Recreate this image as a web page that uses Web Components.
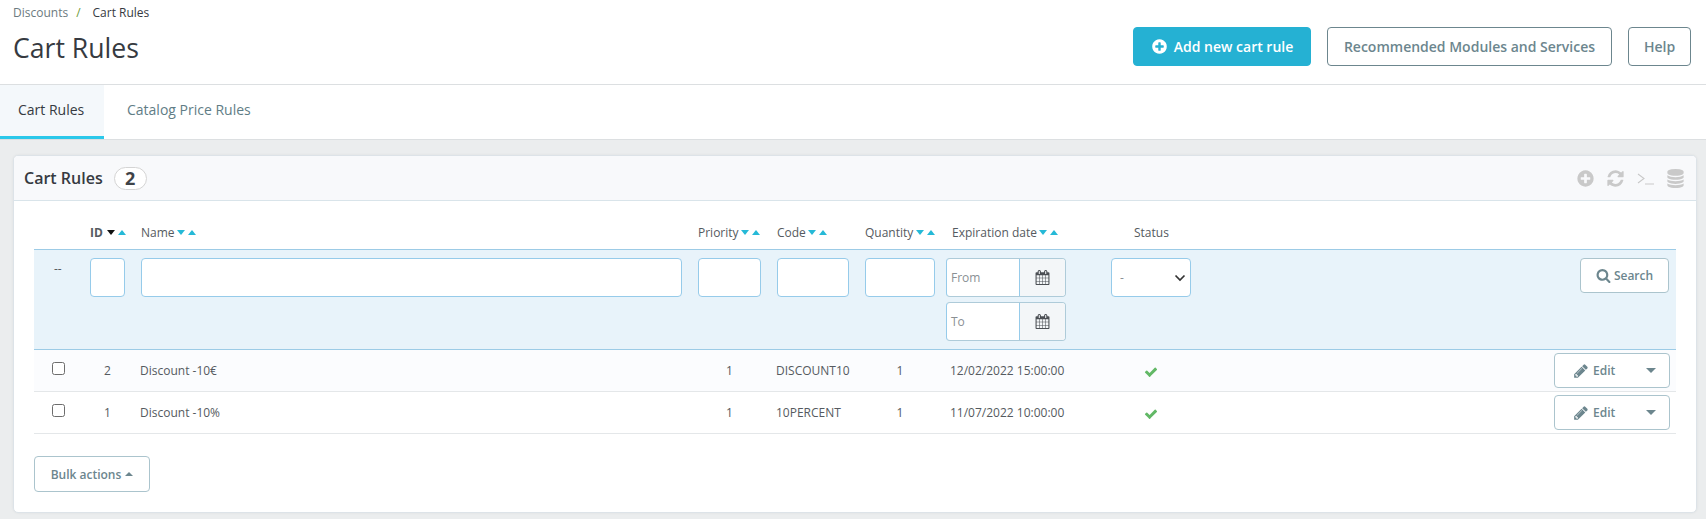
<!DOCTYPE html>
<html lang="en"><head><meta charset="utf-8"><title>Cart Rules</title>
<style>
html,body{margin:0;padding:0;height:519px;overflow:hidden;background:#ebedee;font-family:"Open Sans","Liberation Sans",sans-serif;color:#363a41}
</style></head><body>
<page-head></page-head>
<tab-bar></tab-bar>
<rule-panel title-text="Cart Rules" count="2">
  <head-row></head-row>
  <filter-row></filter-row>
  <data-row rid="2" name="Discount -10€" code="DISCOUNT10" date="12/02/2022 15:00:00" tint></data-row>
  <data-row rid="1" name="Discount -10%" code="10PERCENT" date="11/07/2022 10:00:00"></data-row>
  <bulk-bar></bulk-bar>
</rule-panel>
<script>
const P={
plus:'M1344 960v-128q0-26-19-45t-45-19h-256v-256q0-26-19-45t-45-19h-128q-26 0-45 19t-19 45v256h-256q-26 0-45 19t-19 45v128q0 26 19 45t45 19h256v256q0 26 19 45t45 19h128q26 0 45-19t19-45v-256h256q26 0 45-19t19-45zm320-64q0 209-103 385.5t-279.5 279.5-385.5 103-385.5-103-279.5-279.5-103-385.5 103-385.5 279.5-279.5 385.5-103 385.5 103 279.5 279.5 103 385.5z',
refresh:'M1639 1056q0 5-1 7-64 268-268 434.5t-478 166.5q-146 0-282.5-55t-243.5-157l-129 129q-19 19-45 19t-45-19-19-45v-448q0-26 19-45t45-19h448q26 0 45 19t19 45-19 45l-137 137q71 66 161 102t187 36q134 0 250-65t186-179q11-17 53-117 8-23 30-23h192q13 0 22.5 9.5t9.5 22.5zm25-800v448q0 26-19 45t-45 19h-448q-26 0-45-19t-19-45 19-45l138-138q-148-137-349-137-134 0-250 65t-186 179q-11 17-53 117-8 23-30 23h-199q-13 0-22.5-9.5t-9.5-22.5v-7q65-268 270-434.5t480-166.5q146 0 284 55.5t245 156.5l130-129q19-19 45-19t45 19 19 45z',
db:'M896 768q237 0 443-43t325-127v170q0 69-103 128t-280 93.5-385 34.5-385-34.5-280-93.5-103-128v-170q119 84 325 127t443 43zm0 768q237 0 443-43t325-127v170q0 69-103 128t-280 93.5-385 34.5-385-34.5-280-93.5-103-128v-170q119 84 325 127t443 43zm0-384q237 0 443-43t325-127v170q0 69-103 128t-280 93.5-385 34.5-385-34.5-280-93.5-103-128v-170q119 84 325 127t443 43zm0-1152q208 0 385 34.5t280 93.5 103 128v128q0 69-103 128t-280 93.5-385 34.5-385-34.5-280-93.5-103-128v-128q0-69 103-128t280-93.5 385-34.5z',
cal:'M192 1664h288v-288h-288v288zm352 0h320v-288h-320v288zm-352-352h288v-320h-288v320zm352 0h320v-320h-320v320zm-352-384h288v-288h-288v288zm736 736h320v-288h-320v288zm-384-736h320v-288h-320v288zm768 736h288v-288h-288v288zm-384-352h320v-320h-320v320zm-352-864v-288q0-13-9.5-22.5t-22.5-9.5h-64q-13 0-22.5 9.5t-9.5 22.5v288q0 13 9.5 22.5t22.5 9.5h64q13 0 22.5-9.5t9.5-22.5zm736 864h288v-320h-288v320zm-384-384h320v-288h-320v288zm384 0h288v-288h-288v288zm32-480v-288q0-13-9.5-22.5t-22.5-9.5h-64q-13 0-22.5 9.5t-9.5 22.5v288q0 13 9.5 22.5t22.5 9.5h64q13 0 22.5-9.5t9.5-22.5zm384-64v1280q0 52-38 90t-90 38h-1408q-52 0-90-38t-38-90v-1280q0-52 38-90t90-38h128v-96q0-66 47-113t113-47h64q66 0 113 47t47 113v96h384v-96q0-66 47-113t113-47h64q66 0 113 47t47 113v96h128q52 0 90 38t38 90z',
check:'M1671 566q0 40-28 68l-724 724-136 136q-28 28-68 28t-68-28l-136-136-362-362q-28-28-28-68t28-68l136-136q28-28 68-28t68 28l294 295 656-657q28-28 68-28t68 28l136 136q28 28 28 68z',
search:'M1216 832q0-185-131.5-316.5t-316.5-131.5-316.5 131.5-131.5 316.5 131.5 316.5 316.5 131.5 316.5-131.5 131.5-316.5zm512 832q0 52-38 90t-90 38q-54 0-90-38l-343-342q-179 124-399 124-143 0-273.5-55.5t-225-150-150-225-55.5-273.5 55.5-273.5 150-225 225-150 273.5-55.5 273.5 55.5 225 150 150 225 55.5 273.5q0 220-124 399l343 343q37 37 37 90z',
pencil:'M491 1536l91-91-235-235-91 91v107h128v128h107zm523-928q0-22-22-22-10 0-17 7l-542 542q-7 7-7 17 0 22 22 22 10 0 17-7l542-542q7-7 7-17zm-54-192l416 416-832 832h-416v-416zm683 96q0 53-37 90l-166 166-416-416 166-165q36-38 90-38 53 0 91 38l235 234q37 39 37 91z'};
const ico=(n,s,c)=>`<svg width="${s}" height="${s}" viewBox="0 0 1792 1792" fill="${c}" style="display:block;flex:none"><path d="${P[n]}"/></svg>`;
const COLS='56px 51px 557px 79px 88px 81px 165px 443px 123px';
const rowCss=`:host{display:grid;grid-template-columns:${COLS};margin:0 20px;font-size:12px;color:#555a60}`;
class Base extends HTMLElement{
  constructor(){super();this.attachShadow({mode:'open'})}
  connectedCallback(){this.shadowRoot.innerHTML=this.html()}
}
customElements.define('page-head',class extends Base{html(){return `<style>
:host{display:flex;justify-content:space-between;height:84px;background:#fff;border-bottom:1px solid #dcdfe1;padding:0 15px 0 13px;box-sizing:content-box}
.crumb{font-size:12px;line-height:16px;padding-top:5px;color:#363a41}
.crumb a{color:#6c7a80}.crumb i{font-style:normal;color:#6d9b3a;margin:0 12px 0 8px}
h1{font-size:26.6px;font-weight:400;line-height:38px;margin:8px 0 0;color:#363a41}
.acts{display:flex;gap:16px;padding-top:27px;align-items:flex-start}
.b{box-sizing:border-box;height:39px;display:flex;align-items:center;justify-content:center;gap:6px;border-radius:4px;font-size:14px;font-weight:600;border:1px solid #6c868e;color:#6c868e;background:#fff}
.p{background:#25b1d3;border-color:#25b1d3;color:#fff;width:178px}
</style><div><div class="crumb"><a>Discounts</a><i>/</i>Cart Rules</div><h1>Cart Rules</h1></div>
<div class="acts"><div class="b p">${ico('plus',17,'#fff')}<span>Add new cart rule</span></div><div class="b" style="width:285px">Recommended Modules and Services</div><div class="b" style="width:63px">Help</div></div>`}});
customElements.define('tab-bar',class extends Base{html(){return `<style>
:host{display:flex;height:54px;background:#fff;border-bottom:1px solid #dcdfe1;font-size:14px}
div{box-sizing:border-box;display:flex;align-items:center;height:54px;padding:0 18px 3px;color:#5f7d86;border-bottom:3px solid transparent}
.a{width:104px;background:#f4f8fb;color:#363a41;border-bottom-color:#2bc8ea}
.n{padding-left:23px}
</style><div class="a">Cart Rules</div><div class="n">Catalog Price Rules</div>`}});
customElements.define('rule-panel',class extends Base{html(){return `<style>
:host{display:block;box-sizing:border-box;height:358px;margin:15px 9px 0 13px;background:#fff;border:1px solid #dde3e8;border-radius:5px;box-shadow:0 0 3px rgba(0,0,0,.06);overflow:hidden}
.h{box-sizing:border-box;height:45px;display:flex;align-items:center;padding:0 11px 0 10px;background:#f8f9fb;border-bottom:1px solid #d9e4ea;font-size:16px;font-weight:600;color:#363a41}
.c{margin-left:11px;width:33px;box-sizing:border-box;height:23px;border:1px solid #d4d4d4;border-radius:12px;display:flex;align-items:center;justify-content:center;font-size:18px;font-weight:700;color:#3f4348;background:#fff}
.t{margin-left:auto;display:flex;align-items:center;gap:11px}
svg.term{display:block}
</style><div class="h"><span>${this.getAttribute('title-text')}</span><span class="c">${this.getAttribute('count')}</span>
<span class="t">${ico('plus',19,'#c9c9c9')}${ico('refresh',19,'#c9c9c9')}<svg class="term" width="19" height="19" viewBox="0 0 19 19" fill="none" stroke="#c9c9c9" stroke-width="1.1"><path d="M2 5l6 4.500-6 4.500M9 15h9"/></svg>${ico('db',19,'#c9c9c9')}</span></div><slot></slot>`}});
const sort=(d='#25b9d7')=>`<span class="s"><svg width="8" height="5" viewBox="0 0 8 5"><path d="M0 0h8L4 5z" fill="${d}"/></svg><svg width="8" height="5" viewBox="0 0 8 5"><path d="M0 5h8L4 0z" fill="#25b9d7"/></svg></span>`;
customElements.define('head-row',class extends Base{html(){return `<style>${rowCss}
:host{height:48px;align-items:center;padding-top:14px;box-sizing:border-box;font-size:12px}
span.l{display:flex;align-items:center;gap:2.5px}.s{display:inline-flex;gap:3px}b{font-weight:700;margin-right:1.5px}
</style><span></span><span class="l"><b>ID</b>${sort('#111')}</span><span class="l">Name${sort()}</span><span class="l">Priority${sort()}</span><span class="l">Code${sort()}</span><span class="l">Quantity${sort()}</span><span class="l" style="padding-left:6px">Expiration date${sort()}</span><span class="l" style="padding-left:23px">Status</span><span></span>`}});
customElements.define('filter-row',class extends Base{html(){
const inp=w=>`<div class="i" style="width:${w}px"></div>`;
const dt=t=>`<div class="g"><div class="f">${t}</div><div class="ad">${ico('cal',15,'#4b4f54')}</div></div>`;
return `<style>${rowCss}
:host{box-sizing:border-box;height:101px;background:#e8f3fa;border-top:1px solid #9ccbe6;border-bottom:1px solid #9ccbe6;padding-top:8px;align-items:start}
.i,.sel,.g{box-sizing:border-box;height:39px;background:#fff;border:1px solid #96cbea;border-radius:4px}
.dash{padding:4px 0 0 20px;font-size:12px;line-height:14px}
.g{display:flex;width:120px;overflow:hidden;border-color:#aecbd9 #aecbd9 #aecbd9 #96cbea}.g+.g{margin-top:5px}
.f{box-sizing:border-box;width:73px;padding-left:4px;display:flex;align-items:center;font-size:12px;color:#8a9094;border-right:1px solid #96cbea}
.ad{flex:1;background:#f3f6f8;display:flex;align-items:center;justify-content:center}
.sel{width:80px;display:flex;align-items:center;justify-content:space-between;padding:0 4px 0 8px;font-size:12px;color:#8a9094}
.btn{box-sizing:border-box;width:89px;height:35px;margin-left:26px;background:#fff;border:1px solid #abc4cd;border-radius:4px;display:flex;align-items:center;justify-content:center;gap:3px;font-size:12px;font-weight:600;color:#6c868e}
</style><div class="dash">--</div>${inp(35)}${inp(541)}${inp(63)}${inp(72)}${inp(70)}<div>${dt('From')}${dt('To')}</div>
<div class="sel"><span>-</span><svg width="12" height="8" viewBox="0 0 12 8" fill="none" stroke="#333" stroke-width="1.7"><path d="M1.5 1.5L6 6l4.500-4.500"/></svg></div>
<div class="btn">${ico('search',15,'#6c868e')}<span>Search</span></div>`}});
customElements.define('data-row',class extends Base{html(){const g=n=>this.getAttribute(n);return `<style>${rowCss}
:host{box-sizing:border-box;height:42px;align-items:center;border-bottom:1px solid #e4e7e9;${this.hasAttribute('tint')?'background:#fbfcfe;':''}}
input{appearance:none;display:block;margin:0 0 5px 18px;width:13px;height:13px;box-sizing:border-box;border:1px solid #6d6d6d;border-radius:2.500px;background:#fff}
.c{text-align:center}.id{width:35px}.pr{width:63px}.qt{width:70px}.st{width:80px;display:flex;justify-content:center;padding-top:3px}
.e{box-sizing:border-box;width:116px;height:35px;background:#fff;border:1px solid #abc4cd;border-radius:4px;display:flex;align-items:center;font-size:12px;font-weight:600;color:#6c868e;padding-left:18px;gap:4px}
.e i{margin-left:auto;margin-right:13px;width:0;height:0;border-left:5px solid transparent;border-right:5px solid transparent;border-top:5px solid #6c868e}
.nm{margin-left:-1px}.cd{margin-left:-1px}.dt{padding-left:4px}
</style><div><input type="checkbox"></div><div class="c id">${g('rid')}</div><div class="nm">${g('name')}</div><div class="c pr">1</div><div class="cd">${g('code')}</div><div class="c qt">1</div><div class="dt">${g('date')}</div><div class="st">${ico('check',14,'#62b866')}</div><div class="e">${ico('pencil',16,'#6c868e')}<span>Edit</span><i></i></div>`}});
customElements.define('bulk-bar',class extends Base{html(){return `<style>
:host{display:block;padding:22px 20px 0}
div{box-sizing:border-box;width:116px;height:36px;background:#fff;border:1px solid #abc4cd;border-radius:4px;display:flex;align-items:center;justify-content:center;gap:4px;font-size:12px;font-weight:600;color:#6c868e}
i{width:0;height:0;border-left:4px solid transparent;border-right:4px solid transparent;border-bottom:4px solid #6c868e}
</style><div><span>Bulk actions</span><i></i></div>`}});
</script>
</body></html>
